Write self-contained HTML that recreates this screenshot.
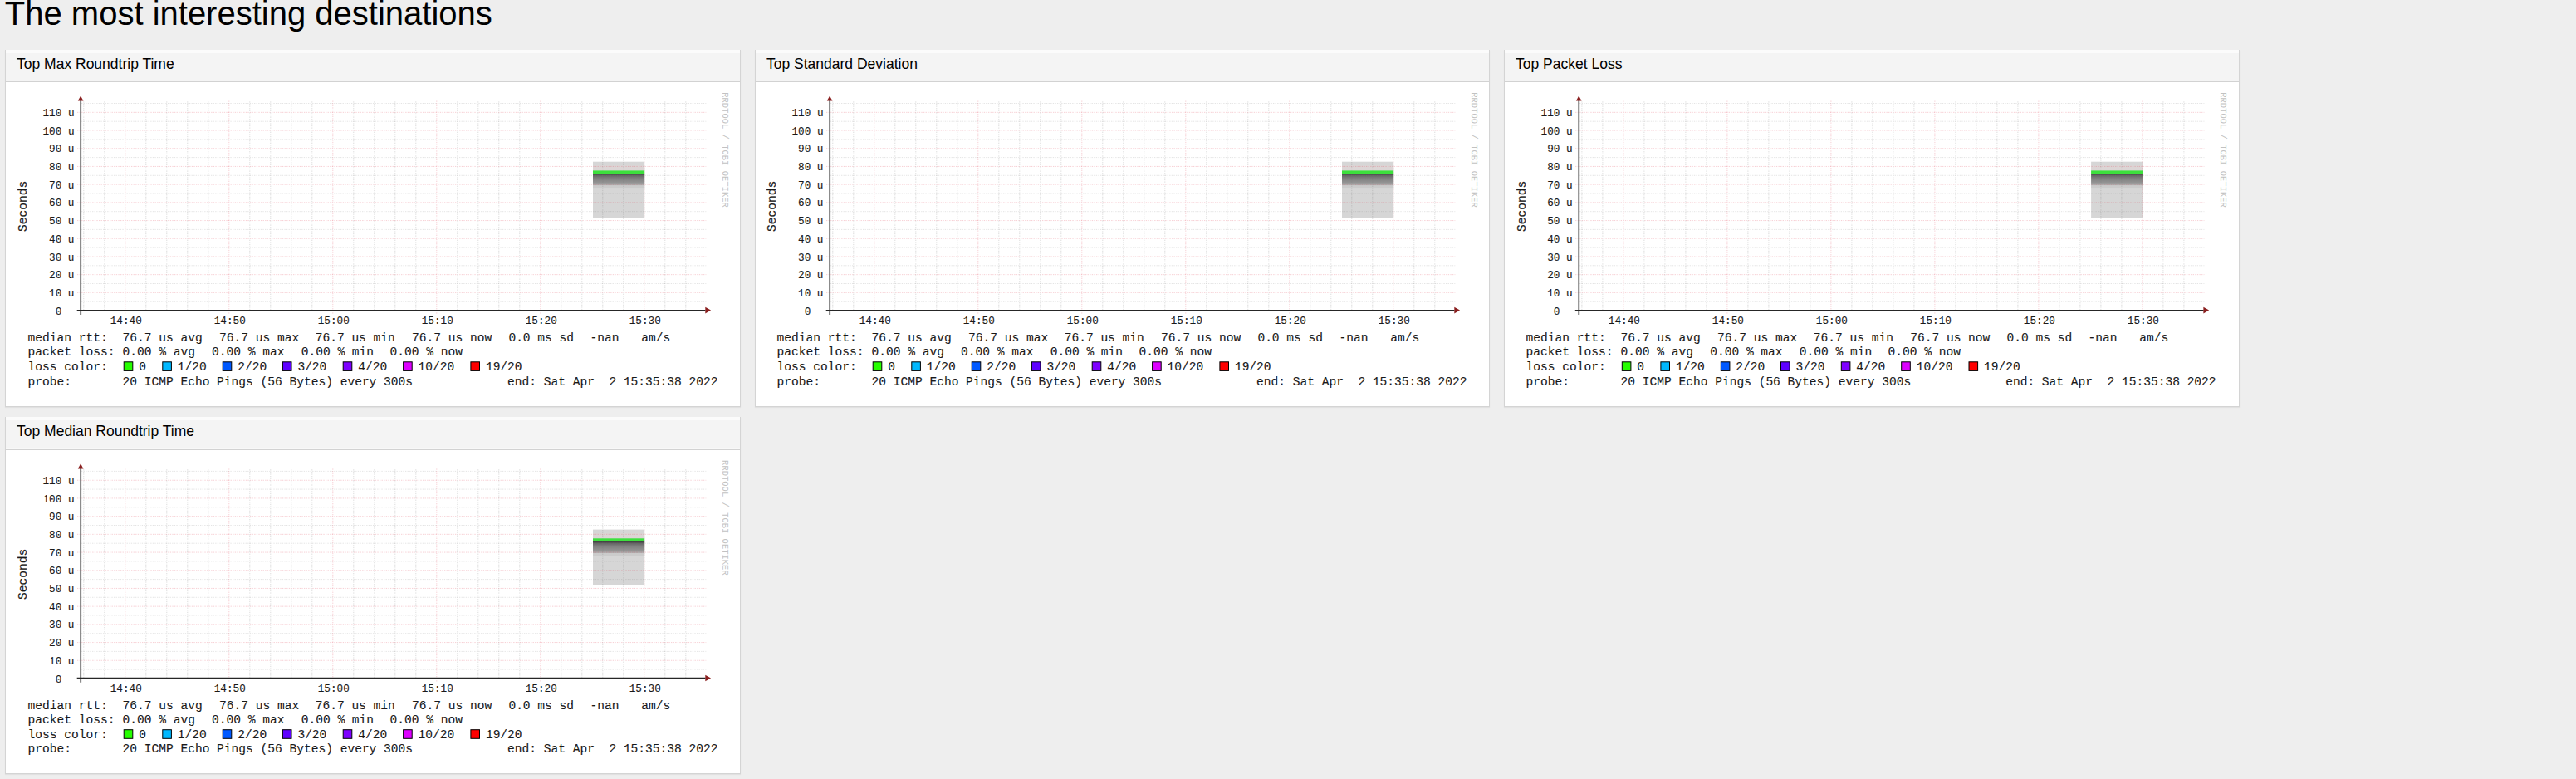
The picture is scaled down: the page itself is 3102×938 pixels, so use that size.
<!DOCTYPE html>
<html><head><meta charset="utf-8"><title>SmokePing</title>
<style>
html,body{margin:0;padding:0}
body{width:3102px;height:938px;overflow:hidden;position:relative;background:#eeeeee;font-family:"Liberation Sans",sans-serif;color:#000}
h1{position:absolute;left:5.8px;top:-6.8px;margin:0;font-weight:normal;font-size:40px;line-height:46px;white-space:nowrap}
.panel{position:absolute;width:884px;height:429px;background:#fff;border:1px solid #d4d4d4;border-top:0;box-shadow:0 1px 1px rgba(0,0,0,.05)}
.hd{position:absolute;left:0;top:0;right:0;height:39px;background:linear-gradient(#fbfbfb 0,#fbfbfb 3.5px,#f4f4f4 3.5px,#f4f4f4 37.3px,#f8f8f8 37.3px);border-bottom:1px solid #d2d2d2;font-size:17.5px;line-height:20px;padding:7px 0 0 13px;box-sizing:border-box}
.hd span{position:absolute}
svg{position:absolute;left:0;top:0}
.ax{font-family:"Liberation Mono",monospace;font-size:12.7px;fill:#1a1a1a;stroke:#1a1a1a;stroke-width:0.12px;white-space:pre}
.lg{font-family:"Liberation Mono",monospace;font-size:14.57px;fill:#1a1a1a;stroke:#1a1a1a;stroke-width:0.12px;white-space:pre}
.sec{font-family:"Liberation Mono",monospace;font-size:14.57px;fill:#1a1a1a;stroke:#1a1a1a;stroke-width:0.2px}
.rrd{font-family:"Liberation Mono",monospace;font-size:10.5px;fill:#c2c2c2;white-space:pre}
</style></head><body>
<h1>The most interesting destinations</h1>
<div class="panel" style="left:6px;top:60px;width:884px;height:429px"><div class="hd" style="height:39px">Top Max Roundtrip Time</div></div>
<div class="panel" style="left:909px;top:60px;width:883px;height:429px"><div class="hd" style="height:39px">Top Standard Deviation</div></div>
<div class="panel" style="left:1811px;top:60px;width:884px;height:429px"><div class="hd" style="height:39px">Top Packet Loss</div></div>
<div class="panel" style="left:6px;top:502px;width:884px;height:429px"><div class="hd" style="height:40px">Top Median Roundtrip Time</div></div>
<svg width="3102" height="938" viewBox="0 0 3102 938">
<g id="gr">
<g><defs><linearGradient id="sm" x1="0" y1="0" x2="0" y2="1"><stop offset="0" stop-color="#3a3a3a"/><stop offset="0.17" stop-color="#666"/><stop offset="0.35" stop-color="#7c7c7c"/><stop offset="0.72" stop-color="#929292"/><stop offset="0.9" stop-color="#a8a8a8"/><stop offset="1" stop-color="#bdbdbd"/></linearGradient></defs>
<rect x="714" y="194.7" width="62.2" height="67.4" fill="#d6d6d6"/>
<rect x="714" y="199.3" width="62.2" height="5.8" fill="#dcd5d5"/>
<rect x="714" y="209" width="62.2" height="14.6" fill="url(#sm)"/>
<rect x="714" y="223.6" width="62.2" height="2.5" fill="#cbcbcb"/></g>
<line x1="98" y1="363.2" x2="850.3" y2="363.2" stroke="rgba(120,120,120,0.2)" stroke-width="1" stroke-dasharray="1.3 1.3"/>
<line x1="93" y1="352.35" x2="850.3" y2="352.35" stroke="rgba(225,70,90,0.26)" stroke-width="1" stroke-dasharray="1.3 1.3"/>
<line x1="98" y1="341.5" x2="850.3" y2="341.5" stroke="rgba(120,120,120,0.2)" stroke-width="1" stroke-dasharray="1.3 1.3"/>
<line x1="93" y1="330.65" x2="850.3" y2="330.65" stroke="rgba(225,70,90,0.26)" stroke-width="1" stroke-dasharray="1.3 1.3"/>
<line x1="98" y1="319.8" x2="850.3" y2="319.8" stroke="rgba(120,120,120,0.2)" stroke-width="1" stroke-dasharray="1.3 1.3"/>
<line x1="93" y1="308.95" x2="850.3" y2="308.95" stroke="rgba(225,70,90,0.26)" stroke-width="1" stroke-dasharray="1.3 1.3"/>
<line x1="98" y1="298.1" x2="850.3" y2="298.1" stroke="rgba(120,120,120,0.2)" stroke-width="1" stroke-dasharray="1.3 1.3"/>
<line x1="93" y1="287.25" x2="850.3" y2="287.25" stroke="rgba(225,70,90,0.26)" stroke-width="1" stroke-dasharray="1.3 1.3"/>
<line x1="98" y1="276.4" x2="850.3" y2="276.4" stroke="rgba(120,120,120,0.2)" stroke-width="1" stroke-dasharray="1.3 1.3"/>
<line x1="93" y1="265.55" x2="850.3" y2="265.55" stroke="rgba(225,70,90,0.26)" stroke-width="1" stroke-dasharray="1.3 1.3"/>
<line x1="98" y1="254.7" x2="850.3" y2="254.7" stroke="rgba(120,120,120,0.2)" stroke-width="1" stroke-dasharray="1.3 1.3"/>
<line x1="93" y1="243.85" x2="850.3" y2="243.85" stroke="rgba(225,70,90,0.26)" stroke-width="1" stroke-dasharray="1.3 1.3"/>
<line x1="98" y1="233" x2="850.3" y2="233" stroke="rgba(120,120,120,0.2)" stroke-width="1" stroke-dasharray="1.3 1.3"/>
<line x1="93" y1="222.15" x2="850.3" y2="222.15" stroke="rgba(225,70,90,0.26)" stroke-width="1" stroke-dasharray="1.3 1.3"/>
<line x1="98" y1="211.3" x2="850.3" y2="211.3" stroke="rgba(120,120,120,0.2)" stroke-width="1" stroke-dasharray="1.3 1.3"/>
<line x1="93" y1="200.45" x2="850.3" y2="200.45" stroke="rgba(225,70,90,0.26)" stroke-width="1" stroke-dasharray="1.3 1.3"/>
<line x1="98" y1="189.6" x2="850.3" y2="189.6" stroke="rgba(120,120,120,0.2)" stroke-width="1" stroke-dasharray="1.3 1.3"/>
<line x1="93" y1="178.75" x2="850.3" y2="178.75" stroke="rgba(225,70,90,0.26)" stroke-width="1" stroke-dasharray="1.3 1.3"/>
<line x1="98" y1="167.9" x2="850.3" y2="167.9" stroke="rgba(120,120,120,0.2)" stroke-width="1" stroke-dasharray="1.3 1.3"/>
<line x1="93" y1="157.05" x2="850.3" y2="157.05" stroke="rgba(225,70,90,0.26)" stroke-width="1" stroke-dasharray="1.3 1.3"/>
<line x1="98" y1="146.2" x2="850.3" y2="146.2" stroke="rgba(120,120,120,0.2)" stroke-width="1" stroke-dasharray="1.3 1.3"/>
<line x1="93" y1="135.35" x2="850.3" y2="135.35" stroke="rgba(225,70,90,0.26)" stroke-width="1" stroke-dasharray="1.3 1.3"/>
<line x1="98" y1="124.5" x2="850.3" y2="124.5" stroke="rgba(120,120,120,0.2)" stroke-width="1" stroke-dasharray="1.3 1.3"/>
<line x1="100.8" y1="122.3" x2="100.8" y2="374" stroke="rgba(120,120,120,0.26)" stroke-width="1" stroke-dasharray="1.3 1.3"/>
<line x1="125.8" y1="122.3" x2="125.8" y2="374" stroke="rgba(120,120,120,0.26)" stroke-width="1" stroke-dasharray="1.3 1.3"/>
<line x1="150.8" y1="121.5" x2="150.8" y2="378" stroke="rgba(225,70,90,0.26)" stroke-width="1" stroke-dasharray="1.3 1.3"/>
<line x1="175.8" y1="122.3" x2="175.8" y2="374" stroke="rgba(120,120,120,0.26)" stroke-width="1" stroke-dasharray="1.3 1.3"/>
<line x1="200.8" y1="122.3" x2="200.8" y2="374" stroke="rgba(120,120,120,0.26)" stroke-width="1" stroke-dasharray="1.3 1.3"/>
<line x1="225.8" y1="122.3" x2="225.8" y2="374" stroke="rgba(120,120,120,0.26)" stroke-width="1" stroke-dasharray="1.3 1.3"/>
<line x1="250.8" y1="122.3" x2="250.8" y2="374" stroke="rgba(120,120,120,0.26)" stroke-width="1" stroke-dasharray="1.3 1.3"/>
<line x1="275.8" y1="121.5" x2="275.8" y2="378" stroke="rgba(225,70,90,0.26)" stroke-width="1" stroke-dasharray="1.3 1.3"/>
<line x1="300.8" y1="122.3" x2="300.8" y2="374" stroke="rgba(120,120,120,0.26)" stroke-width="1" stroke-dasharray="1.3 1.3"/>
<line x1="325.8" y1="122.3" x2="325.8" y2="374" stroke="rgba(120,120,120,0.26)" stroke-width="1" stroke-dasharray="1.3 1.3"/>
<line x1="350.8" y1="122.3" x2="350.8" y2="374" stroke="rgba(120,120,120,0.26)" stroke-width="1" stroke-dasharray="1.3 1.3"/>
<line x1="375.8" y1="122.3" x2="375.8" y2="374" stroke="rgba(120,120,120,0.26)" stroke-width="1" stroke-dasharray="1.3 1.3"/>
<line x1="400.8" y1="121.5" x2="400.8" y2="378" stroke="rgba(225,70,90,0.26)" stroke-width="1" stroke-dasharray="1.3 1.3"/>
<line x1="425.8" y1="122.3" x2="425.8" y2="374" stroke="rgba(120,120,120,0.26)" stroke-width="1" stroke-dasharray="1.3 1.3"/>
<line x1="450.8" y1="122.3" x2="450.8" y2="374" stroke="rgba(120,120,120,0.26)" stroke-width="1" stroke-dasharray="1.3 1.3"/>
<line x1="475.8" y1="122.3" x2="475.8" y2="374" stroke="rgba(120,120,120,0.26)" stroke-width="1" stroke-dasharray="1.3 1.3"/>
<line x1="500.8" y1="122.3" x2="500.8" y2="374" stroke="rgba(120,120,120,0.26)" stroke-width="1" stroke-dasharray="1.3 1.3"/>
<line x1="525.8" y1="121.5" x2="525.8" y2="378" stroke="rgba(225,70,90,0.26)" stroke-width="1" stroke-dasharray="1.3 1.3"/>
<line x1="550.8" y1="122.3" x2="550.8" y2="374" stroke="rgba(120,120,120,0.26)" stroke-width="1" stroke-dasharray="1.3 1.3"/>
<line x1="575.8" y1="122.3" x2="575.8" y2="374" stroke="rgba(120,120,120,0.26)" stroke-width="1" stroke-dasharray="1.3 1.3"/>
<line x1="600.8" y1="122.3" x2="600.8" y2="374" stroke="rgba(120,120,120,0.26)" stroke-width="1" stroke-dasharray="1.3 1.3"/>
<line x1="625.8" y1="122.3" x2="625.8" y2="374" stroke="rgba(120,120,120,0.26)" stroke-width="1" stroke-dasharray="1.3 1.3"/>
<line x1="650.8" y1="121.5" x2="650.8" y2="378" stroke="rgba(225,70,90,0.26)" stroke-width="1" stroke-dasharray="1.3 1.3"/>
<line x1="675.8" y1="122.3" x2="675.8" y2="374" stroke="rgba(120,120,120,0.26)" stroke-width="1" stroke-dasharray="1.3 1.3"/>
<line x1="700.8" y1="122.3" x2="700.8" y2="374" stroke="rgba(120,120,120,0.26)" stroke-width="1" stroke-dasharray="1.3 1.3"/>
<line x1="725.8" y1="122.3" x2="725.8" y2="374" stroke="rgba(120,120,120,0.26)" stroke-width="1" stroke-dasharray="1.3 1.3"/>
<line x1="750.8" y1="122.3" x2="750.8" y2="374" stroke="rgba(120,120,120,0.26)" stroke-width="1" stroke-dasharray="1.3 1.3"/>
<line x1="775.8" y1="121.5" x2="775.8" y2="378" stroke="rgba(225,70,90,0.26)" stroke-width="1" stroke-dasharray="1.3 1.3"/>
<line x1="800.8" y1="122.3" x2="800.8" y2="374" stroke="rgba(120,120,120,0.26)" stroke-width="1" stroke-dasharray="1.3 1.3"/>
<line x1="825.8" y1="122.3" x2="825.8" y2="374" stroke="rgba(120,120,120,0.26)" stroke-width="1" stroke-dasharray="1.3 1.3"/>
<rect x="714" y="205.4" width="62.2" height="3.6" fill="#3de03d"/>
<line x1="97.13" y1="121" x2="97.13" y2="378.9" stroke="#7a7a7a" stroke-width="2"/>
<polygon points="97.13,115.4 93.8,121.6 100.5,121.6" fill="#8a1f1f"/>
<line x1="92.7" y1="373.9" x2="849.5" y2="373.9" stroke="#262626" stroke-width="2"/>
<polygon points="856,373.6 849.3,369.8 849.3,377.4" fill="#8a1f1f"/>
<text x="89.5" y="378.65" text-anchor="end" class="ax">0  </text>
<text x="89.5" y="356.95" text-anchor="end" class="ax">10 u</text>
<text x="89.5" y="335.25" text-anchor="end" class="ax">20 u</text>
<text x="89.5" y="313.55" text-anchor="end" class="ax">30 u</text>
<text x="89.5" y="291.85" text-anchor="end" class="ax">40 u</text>
<text x="89.5" y="270.15" text-anchor="end" class="ax">50 u</text>
<text x="89.5" y="248.45" text-anchor="end" class="ax">60 u</text>
<text x="89.5" y="226.75" text-anchor="end" class="ax">70 u</text>
<text x="89.5" y="205.05" text-anchor="end" class="ax">80 u</text>
<text x="89.5" y="183.35" text-anchor="end" class="ax">90 u</text>
<text x="89.5" y="161.65" text-anchor="end" class="ax">100 u</text>
<text x="89.5" y="139.95" text-anchor="end" class="ax">110 u</text>
<text x="151.8" y="389.8" text-anchor="middle" class="ax">14:40</text>
<text x="276.8" y="389.8" text-anchor="middle" class="ax">14:50</text>
<text x="401.8" y="389.8" text-anchor="middle" class="ax">15:00</text>
<text x="526.8" y="389.8" text-anchor="middle" class="ax">15:10</text>
<text x="651.8" y="389.8" text-anchor="middle" class="ax">15:20</text>
<text x="776.8" y="389.8" text-anchor="middle" class="ax">15:30</text>
<text class="sec" transform="translate(32.4,248.4) rotate(-90)" text-anchor="middle">Seconds</text>
<text class="rrd" transform="translate(870.2,111.2) rotate(90)">RRDTOOL / TOBI OETIKER</text>
<text x="33.5" y="410.7" class="lg">median rtt:</text>
<text x="147.5" y="410.7" class="lg">76.7 us avg</text>
<text x="264" y="410.7" class="lg">76.7 us max</text>
<text x="379.7" y="410.7" class="lg">76.7 us min</text>
<text x="496.1" y="410.7" class="lg">76.7 us now</text>
<text x="612.4" y="410.7" class="lg">0.0 ms sd</text>
<text x="710.5" y="410.7" class="lg">-nan</text>
<text x="772.2" y="410.7" class="lg">am/s</text>
<text x="33.5" y="428.3" class="lg">packet loss:</text>
<text x="147.5" y="428.3" class="lg">0.00 % avg</text>
<text x="255.1" y="428.3" class="lg">0.00 % max</text>
<text x="362.7" y="428.3" class="lg">0.00 % min</text>
<text x="469.5" y="428.3" class="lg">0.00 % now</text>
<text x="33.5" y="445.9" class="lg">loss color:</text>
<rect x="149.2" y="435.8" width="10.6" height="10.6" fill="#26ff00" stroke="#000" stroke-width="1"/>
<text x="167.2" y="445.9" class="lg">0</text>
<rect x="195.8" y="435.8" width="10.6" height="10.6" fill="#00b8ff" stroke="#000" stroke-width="1"/>
<text x="213.8" y="445.9" class="lg">1/20</text>
<rect x="268.2" y="435.8" width="10.6" height="10.6" fill="#0059ff" stroke="#000" stroke-width="1"/>
<text x="286.2" y="445.9" class="lg">2/20</text>
<rect x="340.4" y="435.8" width="10.6" height="10.6" fill="#5e00ff" stroke="#000" stroke-width="1"/>
<text x="358.4" y="445.9" class="lg">3/20</text>
<rect x="413.2" y="435.8" width="10.6" height="10.6" fill="#7e00ff" stroke="#000" stroke-width="1"/>
<text x="431.2" y="445.9" class="lg">4/20</text>
<rect x="485.6" y="435.8" width="10.6" height="10.6" fill="#dd00ff" stroke="#000" stroke-width="1"/>
<text x="503.6" y="445.9" class="lg">10/20</text>
<rect x="566.9" y="435.8" width="10.6" height="10.6" fill="#ff0000" stroke="#000" stroke-width="1"/>
<text x="584.9" y="445.9" class="lg">19/20</text>
<text x="33.5" y="463.6" class="lg">probe:</text>
<text x="147.5" y="463.6" class="lg">20 ICMP Echo Pings (56 Bytes) every 300s</text>
<text x="864.5" y="463.6" text-anchor="end" class="lg">end: Sat Apr  2 15:35:38 2022</text>
</g>
<use href="#gr" transform="translate(902,0)"/>
<use href="#gr" transform="translate(1804.1,0)"/>
<use href="#gr" transform="translate(0,442.9)"/>
</svg>
</body></html>
